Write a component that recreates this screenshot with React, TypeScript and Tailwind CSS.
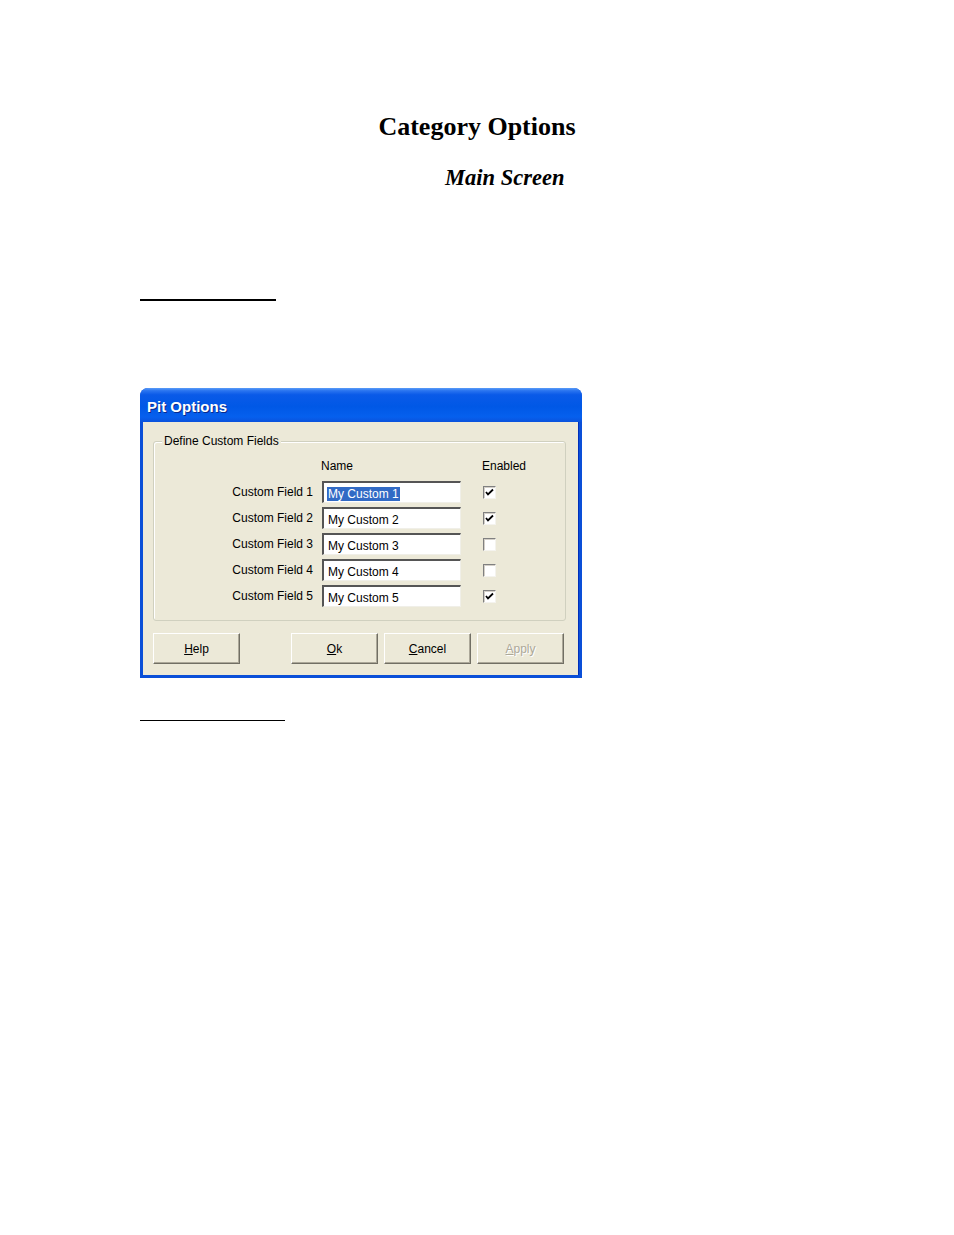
import React from "react";

const rows = [
  { label: "Custom Field 1", value: "My Custom 1", checked: true, selected: true },
  { label: "Custom Field 2", value: "My Custom 2", checked: true },
  { label: "Custom Field 3", value: "My Custom 3", checked: false },
  { label: "Custom Field 4", value: "My Custom 4", checked: false },
  { label: "Custom Field 5", value: "My Custom 5", checked: true },
];

function Check({ checked }: { checked: boolean }) {
  return (
    <div className="w-[13px] h-[13px] bg-white border-t border-l border-[#808080] border-r border-b border-r-[#f4f3ee] border-b-[#f4f3ee] shadow-[inset_1px_1px_0_#d4d0c8] flex items-center justify-center">
      {checked && (
        <svg width="9" height="9" viewBox="0 0 9 9">
          <path d="M1 4 L3 6.5 L8 1.5" stroke="#000" strokeWidth="1.8" fill="none" />
        </svg>
      )}
    </div>
  );
}

function XpButton({ children, disabled }: { children: React.ReactNode; disabled?: boolean }) {
  return (
    <button
      type="button"
      className={`w-[87px] h-[31px] bg-[#ece9d8] border-t border-l border-white border-r border-b border-r-[#716f64] border-b-[#716f64] shadow-[inset_-1px_-1px_0_#aca899] text-[12px] ${disabled ? "text-[#aca899]" : "text-black"}`}
    >
      {children}
    </button>
  );
}

export default function App() {
  return (
    <div className="w-[954px] h-[1235px] bg-white text-black" style={{ fontFamily: '"Liberation Sans", Arial, sans-serif' }}>
      <div className="pt-[110px]">
        <h1 className="text-center text-[26px] leading-[34px] font-bold" style={{ fontFamily: '"Liberation Serif", "Times New Roman", serif' }}>
          Category Options
        </h1>
        <h2 className="pl-[445px] mt-[19px] text-[22.5px] leading-[30px] font-bold italic" style={{ fontFamily: '"Liberation Serif", "Times New Roman", serif' }}>
          Main Screen
        </h2>
      </div>

      <div className="ml-[140px] mt-[106px] w-[136px] h-[2px] bg-black" />

      {/* Pit Options dialog */}
      <div className="ml-[140px] mt-[87px] w-[442px] h-[290px] rounded-t-[8px] bg-[#0a4fd8] flex flex-col overflow-hidden">
        <div className="h-[34px] px-[7px] pt-[4px] flex items-center bg-[linear-gradient(to_bottom,#5a9cf8_0%,#2a74f0_8%,#0a5ae8_20%,#0058e6_55%,#0660ee_85%,#0a52dc_100%)]">
          <span className="text-white font-bold text-[15px] [text-shadow:1px_1px_0_#0a2a8a]">Pit Options</span>
        </div>
        <div className="flex-1 mx-[3px] mb-[3px] bg-[#ece9d8] px-[10px] pt-[19px] border-r border-r-[#0030bb]">
          {/* group box */}
          <div className="relative w-[413px] h-[180px] border border-[#d0d0bf] rounded-[3px] shadow-[inset_1px_1px_0_#fff]">
            <span className="absolute -top-[9px] left-[8px] px-[2px] bg-[#ece9d8] text-[12px] leading-[16px]">Define Custom Fields</span>
            <div className="pt-[16px] flex text-[12px] leading-[16px]">
              <div className="w-[167px]" />
              <div className="w-[161px]">Name</div>
              <div>Enabled</div>
            </div>
            <div className="mt-[7px] flex flex-col gap-[4px]">
              {rows.map((r) => (
                <div key={r.label} className="flex items-center h-[22px] text-[12px]">
                  <div className="w-[159px] text-right">{r.label}</div>
                  <div className="ml-[9px] w-[139px] h-[22px] bg-white border-t-2 border-l-2 border-t-[#555] border-l-[#555] border-r border-b border-r-[#f0efe8] border-b-[#f0efe8] flex items-center pl-[3px] pt-[2px]">
                    {r.selected ? (
                      <span className="bg-[#316ac5] text-white leading-[14px] px-[1px]">{r.value}</span>
                    ) : (
                      <span className="leading-[14px] px-[1px]">{r.value}</span>
                    )}
                  </div>
                  <div className="ml-[22px]">
                    <Check checked={r.checked} />
                  </div>
                </div>
              ))}
            </div>
          </div>
          {/* buttons */}
          <div className="mt-[12px] flex">
            <XpButton>
              <span className="underline">H</span>elp
            </XpButton>
            <div className="ml-[51px] flex gap-[6px]">
              <XpButton>
                <span className="underline">O</span>k
              </XpButton>
              <XpButton>
                <span className="underline">C</span>ancel
              </XpButton>
              <XpButton disabled>
                <span className="[text-shadow:1px_1px_0_#fff]">
                  <span className="underline">A</span>pply
                </span>
              </XpButton>
            </div>
          </div>
        </div>
      </div>

      <div className="ml-[140px] mt-[42px] w-[145px] h-px bg-black" />
    </div>
  );
}
